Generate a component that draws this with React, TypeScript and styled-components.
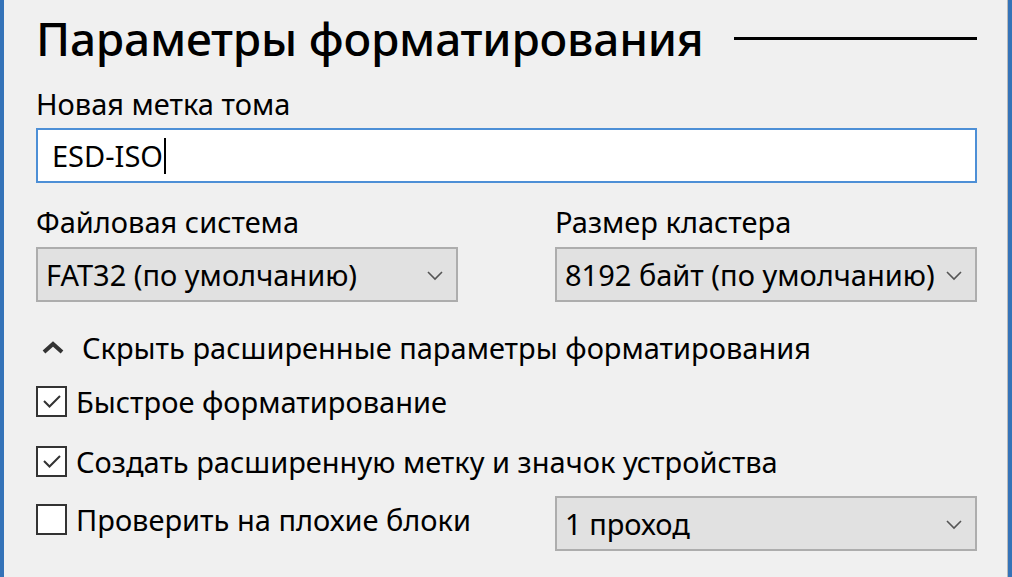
import React from "react";
import styled, { createGlobalStyle } from "styled-components";

const GlobalStyle = createGlobalStyle`
  html, body {
    margin: 0;
    padding: 0;
    background: #f0f0f0;
  }
  * { box-sizing: border-box; }
`;

const FONT = `"Noto Sans", "Open Sans", "DejaVu Sans", sans-serif`;

const Window = styled.div`
  width: 1012px;
  height: 577px;
  overflow: hidden;
  background: #f0f0f0;
  border-left: 4px solid #3473b8;
  border-right: 4px solid #3473b8;
  box-shadow: inset -1px 0 0 #b9b9b9;
  padding: 0 31px 0 32px;
  font-family: ${FONT};
  color: #000;
`;

const TitleRow = styled.div`
  display: flex;
  align-items: center;
  height: 76px;
`;

const Title = styled.h1`
  margin: 0;
  font-size: 46px;
  font-weight: 500;
  letter-spacing: -0.2px;
  white-space: nowrap;
`;

const Rule = styled.div`
  flex: 1;
  height: 3px;
  margin-left: 30px;
  background: #000;
`;

const Label = styled.div<{ $top?: number }>`
  font-size: 29px;
  line-height: 32px;
  height: 32px;
  margin-top: ${(p) => p.$top ?? 0}px;
  white-space: nowrap;
`;

const Input = styled.div`
  margin-top: 8px;
  height: 55px;
  background: #fff;
  border: 2px solid #4d8fd6;
  display: flex;
  align-items: center;
  padding-left: 14px;
  font-size: 29px;
`;

const Caret = styled.span`
  display: inline-block;
  width: 2px;
  height: 36px;
  background: #000;
  margin-left: 1px;
`;

const Grid = styled.div`
  display: grid;
  grid-template-columns: minmax(0, 1fr) minmax(0, 1fr);
  column-gap: 97px;
  align-items: start;
`;

const Field = styled.div`
  display: flex;
  flex-direction: column;
`;

const Select = styled.div<{ $top?: number }>`
  margin-top: ${(p) => p.$top ?? 0}px;
  height: 55px;
  background: #e1e1e1;
  border: 2px solid #adadad;
  display: flex;
  align-items: center;
  padding: 0 12px 0 8px;
  font-size: 29px;
  gap: 6px;
`;

const SelectText = styled.span`
  flex: 1;
  overflow: hidden;
  white-space: nowrap;
`;

const Toggle = styled.div`
  margin-top: 22px;
  display: flex;
  align-items: center;
  height: 46px;
  font-size: 29px;
  gap: 16px;
  padding-left: 4px;
  white-space: nowrap;
`;

const CheckRow = styled.div<{ $h?: number }>`
  display: flex;
  align-items: center;
  gap: 9px;
  height: ${(p) => p.$h ?? 58}px;
  font-size: 29px;
  white-space: nowrap;
`;

const Box = styled.span`
  width: 31px;
  height: 31px;
  border: 2px solid #333;
  background: #fff;
  display: flex;
  align-items: center;
  justify-content: center;
  flex: none;
`;

const Chevron = () => (
  <svg width="18" height="12" viewBox="0 0 18 12">
    <path d="M2 3 L9 10 L16 3" fill="none" stroke="#555" strokeWidth="1.6" />
  </svg>
);

const CheckMark = () => (
  <svg width="22" height="18" viewBox="0 0 22 18">
    <path d="M3 9 L8.5 14.5 L19 4" fill="none" stroke="#333" strokeWidth="2" />
  </svg>
);

const Checkbox = ({ checked }: { checked?: boolean }) => (
  <Box>{checked && <CheckMark />}</Box>
);

export default function App() {
  return (
    <>
      <GlobalStyle />
      <Window>
        <TitleRow>
          <Title>Параметры форматирования</Title>
          <Rule />
        </TitleRow>
        <Label $top={12}>Новая метка тома</Label>
        <Input>
          ESD-ISO
          <Caret />
        </Input>
        <Grid>
          <Field>
            <Label $top={23}>Файловая система</Label>
            <Select $top={9}>
              <SelectText>FAT32 (по умолчанию)</SelectText>
              <Chevron />
            </Select>
          </Field>
          <Field>
            <Label $top={23}>Размер кластера</Label>
            <Select $top={9}>
              <SelectText>8192 байт (по умолчанию)</SelectText>
              <Chevron />
            </Select>
          </Field>
        </Grid>
        <Toggle>
          <svg width="26" height="14" viewBox="0 0 26 14">
            <path d="M4 12 L13 4 L22 12" fill="none" stroke="#333" strokeWidth="4" />
          </svg>
          Скрыть расширенные параметры форматирования
        </Toggle>
        <CheckRow $h={62}>
          <Checkbox checked />
          Быстрое форматирование
        </CheckRow>
        <CheckRow>
          <Checkbox checked />
          Создать расширенную метку и значок устройства
        </CheckRow>
        <Grid>
          <CheckRow>
            <Checkbox />
            Проверить на плохие блоки
          </CheckRow>
          <Select $top={6}>
            <SelectText>1 проход</SelectText>
            <Chevron />
          </Select>
        </Grid>
      </Window>
    </>
  );
}
